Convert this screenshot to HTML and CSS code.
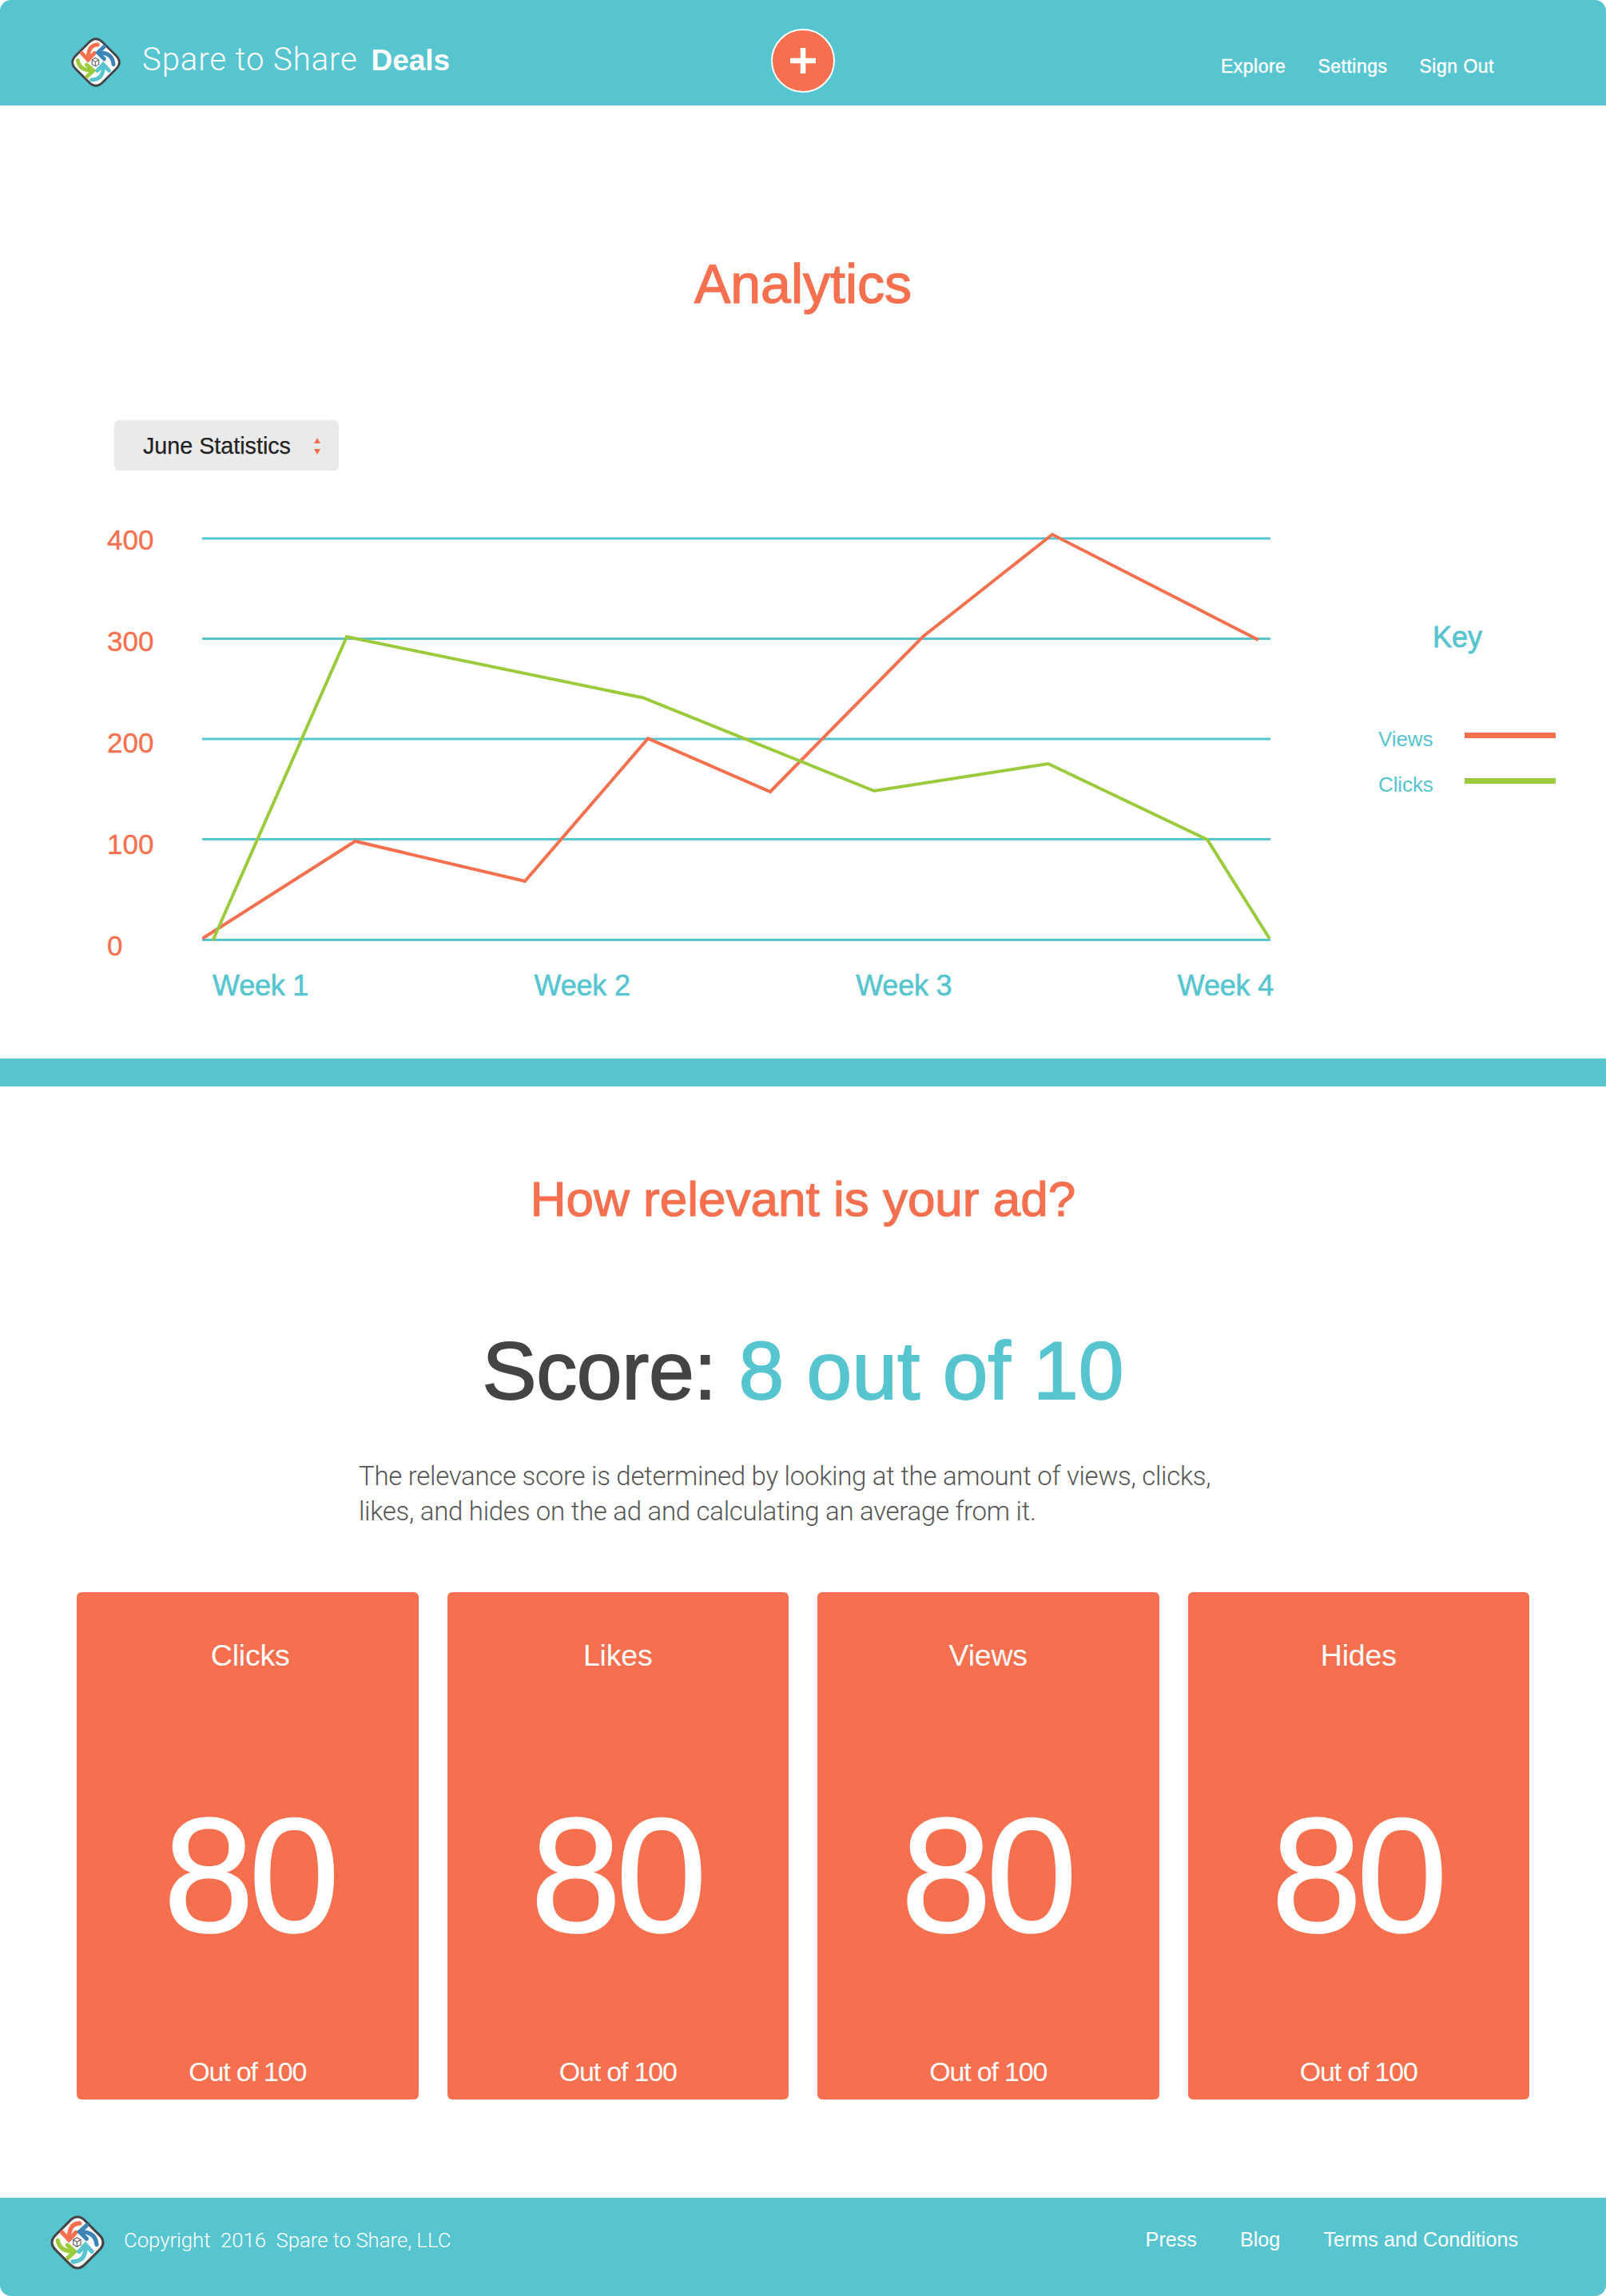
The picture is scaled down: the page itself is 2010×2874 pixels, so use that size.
FILE: index.html
```html
<!DOCTYPE html>
<html lang="en">
<head>
<meta charset="utf-8">
<title>Spare to Share Deals - Analytics</title>
<link rel="stylesheet" href="styles.css">
</head>
<body>
<svg class="defs" width="0" height="0" aria-hidden="true">
  <symbol id="logo" viewBox="-4 -4 108 108">
    <path d="M36 9 Q50 -5 64 9 L91 36 Q105 50 91 64 L64 91 Q50 105 36 91 L9 64 Q-5 50 9 36Z" fill="#fff" stroke="#444" stroke-width="4.500"/>
    <g fill="none" stroke-width="8" stroke-linecap="round" stroke-linejoin="miter">
      <g stroke="#F6704F"><path d="M54 14 Q35 14 34 40"/><path d="M21 31 L34 45 L47 31"/></g>
      <g stroke="#3C83B8"><path d="M86 54 Q84 31 58 30"/><path d="M67 18 L54 30 L67 43"/></g>
      <g stroke="#9BCB3C"><path d="M13 46 Q16 66 42 67"/><path d="M31 55 L45 67 L32 79"/></g>
      <g stroke="#57C5D0"><path d="M41 86 Q66 85 65 58"/><path d="M53 67 L65 54 L77 67"/></g>
    </g>
    <g fill="none" stroke="#666" stroke-width="1.800"><path d="M49 41 L56 45 L56 54 L49 58 L42 54 L42 45Z"/><path d="M42 45 L49 49 L56 45 M49 49 L49 58"/></g>
  </symbol>
</svg>

<header class="topbar">
  <div class="brand">
    <svg class="brand-logo"><use href="#logo"/></svg>
    <div class="brand-name">Spare to Share <strong>Deals</strong></div>
  </div>
  <a class="add-btn" href="#" aria-label="Add">
    <svg viewBox="0 0 34 34" width="32" height="32"><path d="M17 0V34M0 17H34" stroke="#fff" stroke-width="7" fill="none"/></svg>
  </a>
  <nav class="topnav">
    <a href="#">Explore</a>
    <a href="#">Settings</a>
    <a href="#">Sign Out</a>
  </nav>
</header>

<main>
  <section class="analytics">
    <h1 class="title-analytics">Analytics</h1>
    <div class="select">
      <span>June Statistics</span>
      <svg class="select-arrows" viewBox="0 0 8 22" width="8" height="22"><path d="M4 0L8 7H0ZM4 21L0 14H8Z" fill="#F6704F"/></svg>
    </div>
    <div class="chart">
      <div class="y-axis">
        <span>400</span><span>300</span><span>200</span><span>100</span><span>0</span>
      </div>
      <div class="plot">
        <svg class="plot-svg" viewBox="253 612 1342 572" width="1342" height="572">
          <g stroke="#57C5D0" stroke-width="3">
            <path d="M253 674H1590"/><path d="M253 799.500H1590"/><path d="M253 925H1590"/><path d="M253 1050.500H1590"/><path d="M253 1176.500H1590"/>
          </g>
          <polyline fill="none" stroke="#F6704F" stroke-width="4" points="253,1175 444.500,1053 657,1103 811,924.500 964,991 1155,797 1317,669 1575,801"/>
          <polyline fill="none" stroke="#9BCB3C" stroke-width="4" points="266.500,1177 434,797 805,873.500 1094,990 1312,956 1511,1051 1589,1175"/>
        </svg>
        <div class="x-axis">
          <span>Week 1</span><span>Week 2</span><span>Week 3</span><span>Week 4</span>
        </div>
      </div>
      <aside class="key">
        <h3 class="key-title">Key</h3>
        <div class="key-row"><span>Views</span><i class="swatch swatch-views"></i></div>
        <div class="key-row"><span>Clicks</span><i class="swatch swatch-clicks"></i></div>
      </aside>
    </div>
  </section>

  <div class="divider"></div>

  <section class="relevance">
    <h2 class="title-relevance">How relevant is your ad?</h2>
    <p class="score">Score: <span>8 out of 10</span></p>
    <p class="desc">The relevance score is determined by looking at the amount of views, clicks,<br>likes, and hides on the ad and calculating an average from it.</p>
    <div class="cards">
      <article class="card card-first"><h4>Clicks</h4><div class="num">80</div><p>Out of 100</p></article>
      <article class="card"><h4>Likes</h4><div class="num">80</div><p>Out of 100</p></article>
      <article class="card"><h4>Views</h4><div class="num">80</div><p>Out of 100</p></article>
      <article class="card"><h4>Hides</h4><div class="num">80</div><p>Out of 100</p></article>
    </div>
  </section>
</main>

<footer class="footer">
  <div class="footer-left">
    <svg class="footer-logo"><use href="#logo"/></svg>
    <span class="copyright">Copyright&nbsp; 2016&nbsp; Spare to Share, LLC</span>
  </div>
  <nav class="footer-nav">
    <a href="#">Press</a>
    <a href="#">Blog</a>
    <a href="#">Terms and Conditions</a>
  </nav>
</footer>
</body>
</html>
```

FILE: styles.css
```css
* { box-sizing: border-box; }
html, body { margin: 0; padding: 0; }
body {
  width: 2010px;
  background: #fff;
  font-family: "Liberation Sans", Arial, sans-serif;
  color: #444;
}
a { color: inherit; text-decoration: none; }
.defs { position: absolute; }

.topbar {
  height: 132px;
  background: #57C5D0;
  border-radius: 14px 14px 0 0;
  display: grid;
  grid-template-columns: 1fr auto 1fr;
  color: #fff;
}
.brand { display: flex; align-items: flex-start; padding-left: 87px; }
.brand-logo { width: 66px; height: 66px; margin-top: 45px; }
.brand-name {
  margin: 51px 0 0 25px;
  font: 300 40px/48px Roboto, sans-serif;
  letter-spacing: .95px;
  white-space: nowrap;
}
.brand-name strong {
  font: 700 37px/48px "Liberation Sans", sans-serif;
  letter-spacing: 0;
  margin-left: 6px;
}
.add-btn {
  width: 80px;
  height: 80px;
  margin-top: 36px;
  border: 2px solid #fff;
  border-radius: 50%;
  background: #F6704F;
  display: flex;
  align-items: center;
  justify-content: center;
}
.topnav {
  display: flex;
  justify-content: flex-end;
  gap: 40px;
  padding: 70px 140px 0 0;
  font-size: 23px;
  line-height: 26px;
  letter-spacing: .5px;
  -webkit-text-stroke: .45px #fff;
}

.analytics { height: 1193px; padding-top: 183px; }
.title-analytics {
  margin: 0;
  text-align: center;
  font-size: 68px;
  line-height: 80px;
  font-weight: 400;
  color: #F6704F;
  -webkit-text-stroke: 1.300px #F6704F;
}
.select {
  width: 281px;
  height: 63px;
  margin: 131px 0 0 143px;
  padding: 2px 23px 0 36px;
  background: #EAEAEA;
  border-radius: 6px;
  display: flex;
  align-items: center;
  justify-content: space-between;
  font-size: 28.700px;
  color: #222;
  -webkit-text-stroke: .25px #222;
}
.chart { display: flex; margin: 23px 0 0 134px; }
.y-axis {
  width: 119px;
  display: flex;
  flex-direction: column;
  font-size: 35px;
  line-height: 127px;
  color: #F6704F;
  -webkit-text-stroke: .4px #F6704F;
}
.plot { width: 1342px; }
.plot-svg { display: block; }
.x-axis {
  display: flex;
  justify-content: space-between;
  margin-top: 28px;
  padding: 0 1px 0 13px;
  font-size: 36px;
  line-height: 44px;
  letter-spacing: -.2px;
  color: #57C5D0;
  -webkit-text-stroke: .6px #57C5D0;
}
.key { width: 222px; margin: 164px 0 0 130px; color: #57C5D0; }
.key-title {
  margin: 0 0 90px 68px;
  font-size: 36px;
  line-height: 44px;
  font-weight: 400;
  -webkit-text-stroke: .8px #57C5D0;
}
.key-row {
  display: flex;
  justify-content: space-between;
  align-items: flex-start;
  margin-bottom: 27px;
  font-size: 26px;
  line-height: 30px;
  letter-spacing: -.1px;
}
.swatch { display: block; width: 114px; height: 7px; margin-top: 7px; }
.swatch-views { background: #F6704F; }
.swatch-clicks { background: #9BCB3C; }

.divider { height: 35px; background: #57C5D0; }

.relevance { padding: 105px 96px 123px; }
.title-relevance {
  margin: 0;
  text-align: center;
  font-size: 62px;
  line-height: 72px;
  font-weight: 400;
  color: #F6704F;
  -webkit-text-stroke: 1.200px #F6704F;
}
.score {
  margin: 119px 0 0;
  text-align: center;
  font-size: 102px;
  line-height: 120px;
  color: #444;
  -webkit-text-stroke: 1.800px #444;
  letter-spacing: -.3px;
}
.score span { color: #57C5D0; -webkit-text-stroke: 1.800px #57C5D0; letter-spacing: 0; }
.desc {
  margin: 50px 0 0 353px;
  font: 300 33px/44px Roboto, sans-serif;
  letter-spacing: -.29px;
  color: #555;
  white-space: nowrap;
}
.cards {
  display: grid;
  grid-template-columns: repeat(4, 1fr);
  gap: 36px;
  margin-top: 78.500px;
}
.card {
  height: 635.500px;
  padding-top: 56px;
  background: #F6704F;
  border-radius: 6px;
  color: #fff;
  text-align: center;
}
.card h4 { margin: 0; font-size: 37.500px; line-height: 46px; font-weight: 400; letter-spacing: -.2px; }
.card-first h4 { padding-left: 7px; }
.card .num { padding-right: 5px; }
.card-first .num { padding: 0 0 0 3px; }
.num {
  margin-top: 142px;
  font-size: 205px;
  line-height: 220px;
  letter-spacing: -7px;
  -webkit-text-stroke: 1.500px #fff;
}
.card p { margin: 116px 0 0; font-size: 34px; line-height: 40px; letter-spacing: -1.200px; }

.footer {
  height: 123px;
  background: #57C5D0;
  border-radius: 0 0 14px 14px;
  display: flex;
  justify-content: space-between;
  align-items: flex-start;
  padding: 0 110px 0 61px;
  color: #fff;
}
.footer-left { display: flex; align-items: flex-start; }
.footer-logo { width: 72px; height: 72px; margin-top: 20px; }
.copyright {
  margin: 37px 0 0 22px;
  font: 300 25.700px/32px Roboto, sans-serif;
}
.footer-nav {
  display: flex;
  gap: 54px;
  margin-top: 37px;
  font-size: 25.200px;
  line-height: 30px;
}
```
